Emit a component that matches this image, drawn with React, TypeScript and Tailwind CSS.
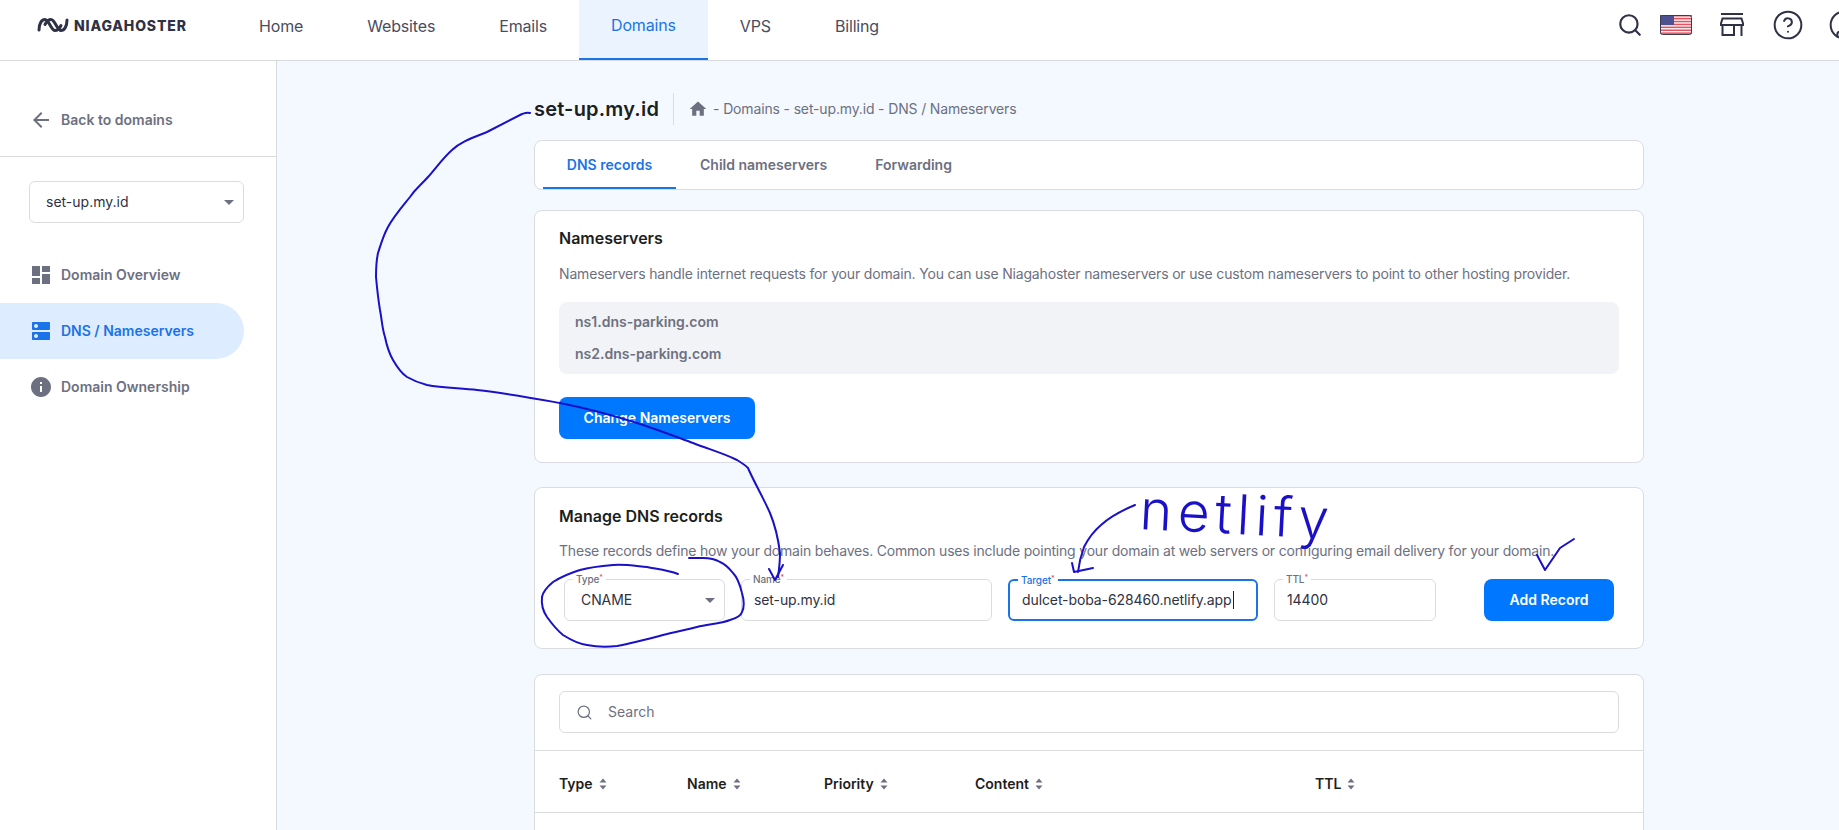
import { CircleHelp, CircleUser, Search } from "lucide-react";
import type { ReactNode } from "react";

const NAV = ["Home", "Websites", "Emails", "Domains", "VPS", "Billing"];

function MaterialIcon({ d, className = "" }: { d: string; className?: string }) {
  return (
    <svg viewBox="0 0 24 24" fill="currentColor" className={`shrink-0 ${className}`}>
      <path d={d} />
    </svg>
  );
}

function Caret({ className = "" }: { className?: string }) {
  return <span className={`h-0 w-0 border-x-[5px] border-t-[5px] border-x-transparent border-t-[#6d7081] ${className}`} />;
}

function SortArrows() {
  return (
    <svg viewBox="0 0 8 12" className="h-3 w-2 text-[#6d7081]" fill="currentColor">
      <path d="M4 0.5 7.5 4.5H0.5zM4 11.5 0.5 7.5H7.5z" />
    </svg>
  );
}

function Flag() {
  const stripes = [0, 1, 2, 3, 4, 5, 6];
  return (
    <svg viewBox="0 0 32 20" className="h-5 w-8 shrink-0">
      <rect width="32" height="20" rx="2" fill="#f7f4f6" />
      {stripes.map((i) => (
        <rect key={i} y={i * 2.9} width="32" height="1.5" fill="#e2535f" />
      ))}
      <rect width="14" height="10" fill="#4d5191" />
      <rect x="0.5" y="0.5" width="31" height="19" rx="2" fill="none" stroke="#3b3c52" />
    </svg>
  );
}

function StoreIcon() {
  return (
    <svg viewBox="0 0 24 24" className="h-6 w-6 shrink-0" fill="none" stroke="#2f3145" strokeWidth="2">
      <path d="M1 1h22M2.500 5.500h19L23.500 12H.5zM2.500 12v11M21.500 12v11M2.500 22H14M14 12v11" />
    </svg>
  );
}

function Field({
  label,
  active = false,
  className,
  children,
}: {
  label: string;
  active?: boolean;
  className: string;
  children: ReactNode;
}) {
  return (
    <div
      className={`relative flex h-[42px] items-center rounded-md text-sm tracking-[-0.1px] text-[#2f3145] ${
        active ? "border-2 border-[#1a73e8]" : "border border-[#dadce0]"
      } ${className}`}
    >
      <span
        className={`absolute -top-[7px] left-2 bg-white px-[3px] text-[10px] leading-3 font-medium ${
          active ? "text-[#1a73e8]" : "text-[#6d7081]"
        }`}
      >
        {label}
        <sup className="text-[7px] text-[#e2535f]">*</sup>
      </span>
      {children}
    </div>
  );
}

function Ink() {
  return (
    <svg
      viewBox="0 0 1839 830"
      className="pointer-events-none absolute inset-0 h-[830px] w-[1839px]"
      fill="none"
      stroke="#1a10c8"
      strokeWidth="2"
      strokeLinecap="round"
      strokeLinejoin="round"
    >
      <path d="M530 113C527 112 525 113 522 114L487 132C472 138 460 142 452 150C443 158 436 168 428 177C420 186 416 188 410 197C402 207 394 216 388 227C383 236 381 244 378 253C376 262 376 268 376 277C377 288 378 298 380 310C382 320 382 328 385 337C387 347 389 353 393 360C397 367 401 373 407 377C414 381 419 383 427 385C443 388 460 388 477 390C505 393 532 398 560 403C585 408 612 415 637 423C656 429 674 436 693 443C708 449 723 453 737 460C742 463 745 465 748 468C754 482 762 495 770 513C775 525 778 537 780 553C780 562 779 570 778 577" />
      <path d="M769 569 775 580 783 565" />
      <path d="M678 574C668 570 657 569 647 567C636 566 624 564 613 565C601 566 591 567 580 570C570 573 561 577 553 582C547 587 543 591 542 597C541 605 543 611 547 617C552 624 557 630 563 635C571 640 578 644 587 645C597 647 607 647 617 646C633 643 648 639 663 635C674 632 686 630 697 627C708 624 720 624 730 620C737 618 741 616 742 612C745 606 744 600 742 593C740 585 738 578 733 573C729 568 725 564 720 562C715 559 709 558 703 558L689 558" />
      <path d="M1135 505C1123 510 1111 516 1101 525C1094 531 1088 539 1084 547C1081 555 1079 563 1078 572" />
      <path d="M1072 563 1074 572 1093 568" />
      <path d="M1537 555 1545 570 1560 548 1574 539" />
    </svg>
  );
}

export default function App() {
  return (
    <div className="relative flex h-[830px] w-[1839px] flex-col overflow-hidden bg-white font-['Inter',sans-serif] text-[#2f3145]">
      <header className="flex h-[61px] shrink-0 items-stretch border-b border-[#d8dae0] bg-white">
        <div className="flex w-[227px] shrink-0 items-center gap-[5px] pb-[10px] pl-[37px]">
          <svg viewBox="0 0 32 16" className="h-4 w-8 shrink-0" fill="none" stroke="#2f3145" strokeWidth="3" strokeLinecap="round">
            <path d="M2 13C2 6 5 2.500 8 2.500c4 0 6 11 10 11 3 0 5-3 6-5M30 3C30 10 27 13.500 24 13.500c-4 0-6-11-10-11-3 0-5 3-6 5" />
          </svg>
          <span className="text-[14px] font-extrabold tracking-[0.06em] text-[#2f3145]">NIAGAHOSTER</span>
        </div>
        <nav className="flex items-stretch">
          {NAV.map((item) => (
            <a
              key={item}
              className={`flex items-center px-8 pb-[9px] text-base tracking-[-0.01em] ${
                item === "Domains"
                  ? "border-b-2 border-[#1a73e8] bg-[#eaf3fe] pb-[7px] text-[#1a73e8]"
                  : "text-[#4a4c60]"
              }`}
            >
              {item}
            </a>
          ))}
        </nav>
        <div className="ml-auto -mr-[21px] flex items-center gap-[28px] pb-[10px]">
          <Search size={26} strokeWidth={2} className="-mr-[11px] shrink-0" />
          <Flag />
          <StoreIcon />
          <CircleHelp size={32} strokeWidth={1.5} className="shrink-0" />
          <CircleUser size={32} strokeWidth={1.5} className="-ml-[4px] shrink-0" />
        </div>
      </header>

      <div className="flex min-h-0 flex-1">
        <aside className="w-[277px] shrink-0 border-r border-[#d8dae0] bg-white">
          <div className="flex h-[96px] items-center gap-2 border-b border-[#d8dae0] pt-[23px] pl-[29px] text-sm font-semibold text-[#6d7081]">
            <MaterialIcon d="M20 11H7.830l5.590-5.590L12 4l-8 8 8 8 1.410-1.410L7.830 13H20v-2z" className="h-6 w-6" />
            Back to domains
          </div>
          <div className="mt-[24px] ml-[29px] flex h-[42px] w-[215px] items-center justify-between rounded-md border border-[#dadce0] pr-[9px] pl-[16px] text-sm">
            set-up.my.id
            <Caret />
          </div>
          <nav className="mt-[24px] flex w-[244px] flex-col text-sm font-semibold text-[#6d7081]">
            <div className="flex h-14 items-center gap-2 pl-[29px]">
              <MaterialIcon d="M3 13h8V3H3v10zm0 8h8v-6H3v6zm10 0h8V11h-8v10zm0-18v6h8V3h-8z" className="h-6 w-6" />
              Domain Overview
            </div>
            <div className="flex h-14 items-center gap-2 rounded-r-[28px] bg-[#deecff] pl-[29px] text-[#1a73e8]">
              <MaterialIcon
                d="M20 13H4c-.55 0-1 .45-1 1v6c0 .55.45 1 1 1h16c.55 0 1-.45 1-1v-6c0-.55-.45-1-1-1zM7 19c-1.100 0-2-.9-2-2s.9-2 2-2 2 .9 2 2-.9 2-2 2zM20 3H4c-.55 0-1 .45-1 1v6c0 .55.45 1 1 1h16c.55 0 1-.45 1-1V4c0-.55-.45-1-1-1zM7 9c-1.100 0-2-.9-2-2s.9-2 2-2 2 .9 2 2-.9 2-2 2z"
                className="h-6 w-6"
              />
              DNS / Nameservers
            </div>
            <div className="flex h-14 items-center gap-2 pl-[29px]">
              <MaterialIcon
                d="M12 2C6.480 2 2 6.480 2 12s4.480 10 10 10 10-4.480 10-10S17.520 2 12 2zm1 15h-2v-6h2v6zm0-8h-2V7h2v2z"
                className="h-6 w-6"
              />
              Domain Ownership
            </div>
          </nav>
        </aside>

        <main className="min-w-0 flex-1 overflow-hidden bg-[#f4f9ff] pl-[257px]">
          <div className="w-[1110px]">
            <div className="flex h-[79px] items-center pt-[16px]">
              <h1 className="text-xl font-semibold tracking-[0.01em] text-[#1d1e20]">set-up.my.id</h1>
              <div className="mx-[14px] h-8 w-px bg-[#dadce0]" />
              <div className="flex items-center gap-[5px] text-sm tracking-[-0.15px] text-[#6d7081]">
                <MaterialIcon d="M10 20v-6h4v6h5v-8h3L12 3 2 12h3v8z" className="h-5 w-5" />
                - Domains - set-up.my.id - DNS / Nameservers
              </div>
            </div>

            <div className="flex h-[50px] items-stretch rounded-lg border border-[#dadce0] bg-white pl-2 text-sm font-semibold text-[#6d7081]">
              <div className="flex w-[133px] items-center justify-center border-b-2 border-[#1a73e8] pt-px text-[#1a73e8]">DNS records</div>
              <div className="flex items-center px-6">Child nameservers</div>
              <div className="flex items-center px-6">Forwarding</div>
            </div>

            <section className="mt-[20px] h-[253px] rounded-lg border border-[#dadce0] bg-white px-6 pt-[15px]">
              <h2 className="text-base leading-6 font-semibold text-[#1d1e20]">Nameservers</h2>
              <p className="mt-[14px] text-sm leading-5 tracking-[-0.17px] text-[#6d7081]">
                Nameservers handle internet requests for your domain. You can use Niagahoster nameservers or use custom nameservers to point to other hosting provider.
              </p>
              <div className="mt-[18px] flex h-[72px] flex-col justify-center gap-[12px] rounded-lg bg-[#f2f3f6] px-4 text-sm leading-5 font-semibold text-[#6d7081]">
                <div>ns1.dns-parking.com</div>
                <div>ns2.dns-parking.com</div>
              </div>
              <button className="mt-[23px] h-[42px] w-[196px] rounded-lg bg-[#0077ff] text-sm font-semibold text-white">Change Nameservers</button>
            </section>

            <section className="mt-[24px] h-[162px] rounded-lg border border-[#dadce0] bg-white px-6 pt-[16px]">
              <h2 className="text-base leading-6 font-semibold text-[#1d1e20]">Manage DNS records</h2>
              <p className="mt-[13px] text-sm leading-5 tracking-[-0.2px] text-[#6d7081]">
                These records define how your domain behaves. Common uses include pointing your domain at web servers or configuring email delivery for your domain.
              </p>
              <div className="mt-[18px] flex items-center gap-4 px-[5px]">
                <Field label="Type" className="w-[161px] justify-between pr-[9px] pl-[16px]">
                  CNAME
                  <Caret />
                </Field>
                <Field label="Name" className="w-[251px] px-3">set-up.my.id</Field>
                <Field label="Target" active className="w-[250px] px-3">
                  dulcet-boba-628460.netlify.app
                  <span className="ml-px h-[18px] w-px bg-[#1d1e20]" />
                </Field>
                <Field label="TTL" className="w-[162px] px-3">14400</Field>
                <button className="ml-auto h-[42px] w-[130px] rounded-lg bg-[#0077ff] text-sm font-semibold text-white">Add Record</button>
              </div>
            </section>

            <section className="mt-[25px] h-[200px] rounded-lg border border-[#dadce0] bg-white">
              <div className="border-b border-[#dadce0] px-6 pt-4 pb-[17px]">
                <div className="flex h-[42px] items-center gap-[15px] rounded-md border border-[#dadce0] pl-4 text-sm text-[#6d7081]">
                  <Search size={17} strokeWidth={1.75} />
                  Search
                </div>
              </div>
              <div className="grid h-[62px] grid-cols-[128px_137px_151px_340px_1fr] items-center border-b border-[#dadce0] px-6 pt-[4px] text-sm font-semibold text-[#1d1e20]">
                {["Type", "Name", "Priority", "Content", "TTL"].map((col) => (
                  <div key={col} className="flex items-center gap-[6px]">
                    {col}
                    <SortArrows />
                  </div>
                ))}
              </div>
            </section>
          </div>
        </main>
      </div>

      <Ink />
      <span className="pointer-events-none absolute top-[481px] left-[1140px] rotate-[3deg] text-[55px] leading-[1.2] font-light tracking-[0.1em] text-[#1a10c8]">
        netlify
      </span>
    </div>
  );
}
